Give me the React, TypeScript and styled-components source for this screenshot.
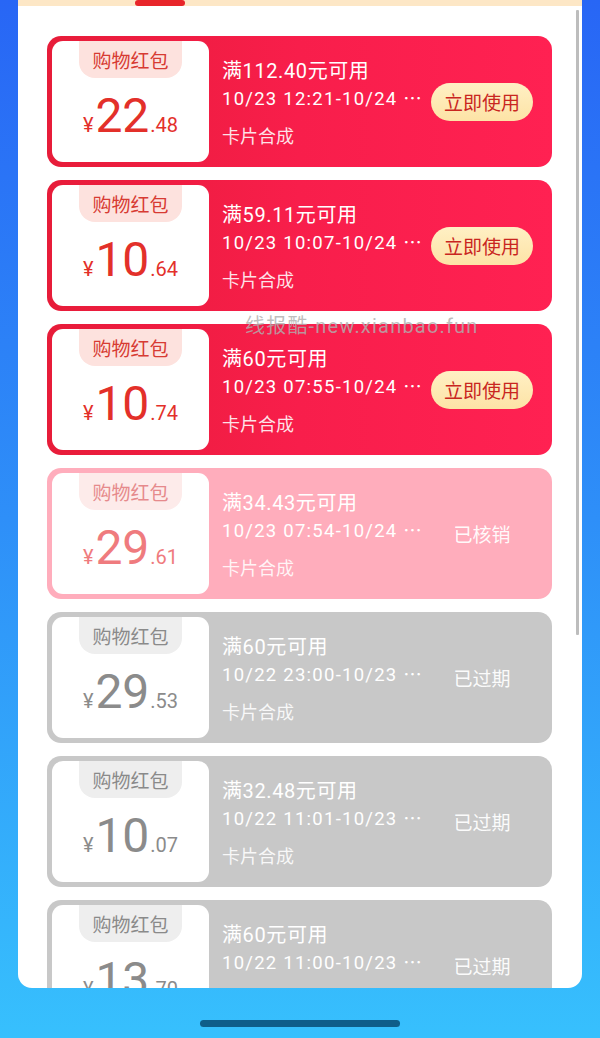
import React from "react";
import styled, { createGlobalStyle } from "styled-components";

type Variant = "red" | "pink" | "gray";

interface Coupon {
  variant: Variant;
  yuan: string;
  cents: string;
  title: string;
  date: string;
  status?: string;
}

const coupons: Coupon[] = [
  { variant: "red", yuan: "22", cents: ".48", title: "满112.40元可用", date: "10/23 12:21-10/24" },
  { variant: "red", yuan: "10", cents: ".64", title: "满59.11元可用", date: "10/23 10:07-10/24" },
  { variant: "red", yuan: "10", cents: ".74", title: "满60元可用", date: "10/23 07:55-10/24" },
  { variant: "pink", yuan: "29", cents: ".61", title: "满34.43元可用", date: "10/23 07:54-10/24", status: "已核销" },
  { variant: "gray", yuan: "29", cents: ".53", title: "满60元可用", date: "10/22 23:00-10/23", status: "已过期" },
  { variant: "gray", yuan: "10", cents: ".07", title: "满32.48元可用", date: "10/22 11:01-10/23", status: "已过期" },
  { variant: "gray", yuan: "13", cents: ".70", title: "满60元可用", date: "10/22 11:00-10/23", status: "已过期" },
];

const palette = {
  red: {
    bg: "linear-gradient(90deg, #e71c39 0%, #f81e4b 50%, #ff2152 100%)",
    badgeBg: "#fde2de",
    badgeColor: "#d73b33",
    amount: "#e3302a",
  },
  pink: {
    bg: "#ffadbc",
    badgeBg: "#fdebea",
    badgeColor: "#e68a8c",
    amount: "#ef7b7e",
  },
  gray: {
    bg: "#c8c8c8",
    badgeBg: "#eeeeee",
    badgeColor: "#8a8a8a",
    amount: "#8b8b8b",
  },
};

const GlobalStyle = createGlobalStyle`
  html, body { margin: 0; padding: 0; }
  body {
    font-family: Roboto, "Noto Sans CJK SC", "Noto Sans", sans-serif;
    -webkit-font-smoothing: antialiased;
  }
  * { box-sizing: border-box; }
`;

const Screen = styled.div`
  position: relative;
  width: 600px;
  height: 1038px;
  overflow: hidden;
  background: linear-gradient(180deg, #2866f5 0%, #2e8ff8 50%, #37c0fd 100%);
  display: flex;
  flex-direction: column;
  align-items: center;
`;

const Panel = styled.div`
  position: relative;
  width: 564px;
  height: 988px;
  flex-shrink: 0;
  background: #ffffff;
  border-radius: 0 0 14px 14px;
  overflow: hidden;
  display: flex;
  flex-direction: column;
`;

const TabStrip = styled.div`
  position: relative;
  height: 6px;
  flex-shrink: 0;
  background: #fde7c6;
`;

const TabIndicator = styled.div`
  position: absolute;
  left: 117px;
  top: 0;
  width: 50px;
  height: 6px;
  border-radius: 3px;
  background: #e8262a;
`;

const ScrollThumb = styled.div`
  position: absolute;
  right: 3px;
  top: 10px;
  width: 3px;
  height: 625px;
  background: #bdbdbd;
  border-radius: 1px;
`;

const List = styled.div`
  display: flex;
  flex-direction: column;
  gap: 13px;
  padding: 30px 0 0 29px;
`;

const Card = styled.div<{ $variant: Variant }>`
  flex-shrink: 0;
  width: 505px;
  height: 131px;
  border-radius: 14px;
  padding: 5px;
  display: flex;
  background: ${(p) => palette[p.$variant].bg};
  color: #ffffff;
`;

const Ticket = styled.div`
  width: 157px;
  flex-shrink: 0;
  background: #ffffff;
  border-radius: 11px;
  display: flex;
  flex-direction: column;
  align-items: center;
  overflow: hidden;
`;

const Badge = styled.div<{ $variant: Variant }>`
  width: 103px;
  height: 37px;
  border-radius: 0 0 16px 16px;
  display: flex;
  align-items: center;
  justify-content: center;
  font-family: "Noto Sans CJK SC", sans-serif;
  font-size: 19px;
  background: ${(p) => palette[p.$variant].badgeBg};
  color: ${(p) => palette[p.$variant].badgeColor};
`;

const Amount = styled.div<{ $variant: Variant }>`
  margin-top: 14px;
  display: flex;
  align-items: baseline;
  font-family: Roboto, sans-serif;
  color: ${(p) => palette[p.$variant].amount};
  line-height: 48px;
`;

const Yen = styled.span`
  font-size: 20px;
  margin-right: 2px;
`;

const Yuan = styled.span`
  font-size: 48px;
`;

const Cents = styled.span`
  font-size: 20px;
  margin-left: 1px;
`;

const Info = styled.div`
  flex: 1;
  min-width: 0;
  padding: 17px 0 0 13px;
  display: flex;
  flex-direction: column;
  white-space: nowrap;
`;

const Title = styled.div`
  font-size: 20px;
  line-height: 26px;
  letter-spacing: 0.6px;
`;

const DateLine = styled.div`
  font-size: 18.5px;
  line-height: 26px;
  letter-spacing: 1.25px;
`;

const Dots = styled.span`
  font-family: "Noto Sans CJK SC", sans-serif;
  letter-spacing: 0;
`;

const Source = styled.div`
  margin-top: 10px;
  font-family: "Noto Sans CJK SC", sans-serif;
  font-size: 18px;
  line-height: 26px;
  color: rgba(255, 255, 255, 0.88);
`;

const Action = styled.div`
  width: 102px;
  margin-right: 14px;
  flex-shrink: 0;
  display: flex;
  align-items: center;
  justify-content: center;
`;

const UseButton = styled.div`
  height: 38px;
  width: 102px;
  border-radius: 19px;
  background: linear-gradient(180deg, #fff0c4 0%, #fde3a6 100%);
  color: #c9261f;
  font-family: "Noto Sans CJK SC", sans-serif;
  font-size: 19px;
  display: flex;
  align-items: center;
  justify-content: center;
`;

const Status = styled.div`
  font-family: "Noto Sans CJK SC", sans-serif;
  font-size: 19px;
  color: rgba(255, 255, 255, 0.95);
`;

const Watermark = styled.div`
  position: absolute;
  left: 245px;
  top: 312px;
  font-family: Roboto, "Noto Sans CJK SC", sans-serif;
  font-size: 20px;
  letter-spacing: 1.2px;
  line-height: 28px;
  color: rgba(175, 175, 175, 0.82);
  white-space: nowrap;
  pointer-events: none;
`;

const HomeBar = styled.div`
  margin-top: 32px;
  width: 200px;
  height: 7px;
  border-radius: 4px;
  background: #0f5d8a;
  flex-shrink: 0;
`;

function CouponCard({ c }: { c: Coupon }) {
  return (
    <Card $variant={c.variant}>
      <Ticket>
        <Badge $variant={c.variant}>购物红包</Badge>
        <Amount $variant={c.variant}>
          <Yen>¥</Yen>
          <Yuan>{c.yuan}</Yuan>
          <Cents>{c.cents}</Cents>
        </Amount>
      </Ticket>
      <Info>
        <Title>{c.title}</Title>
        <DateLine>
          {c.date} <Dots>…</Dots>
        </DateLine>
        <Source>卡片合成</Source>
      </Info>
      <Action>
        {c.status ? <Status>{c.status}</Status> : <UseButton>立即使用</UseButton>}
      </Action>
    </Card>
  );
}

export default function App() {
  return (
    <>
      <GlobalStyle />
      <Screen>
        <Panel>
          <TabStrip>
            <TabIndicator />
          </TabStrip>
          <List>
            {coupons.map((c, i) => (
              <CouponCard key={i} c={c} />
            ))}
          </List>
          <ScrollThumb />
        </Panel>
        <HomeBar />
        <Watermark>线报酷-new.xianbao.fun</Watermark>
      </Screen>
    </>
  );
}
